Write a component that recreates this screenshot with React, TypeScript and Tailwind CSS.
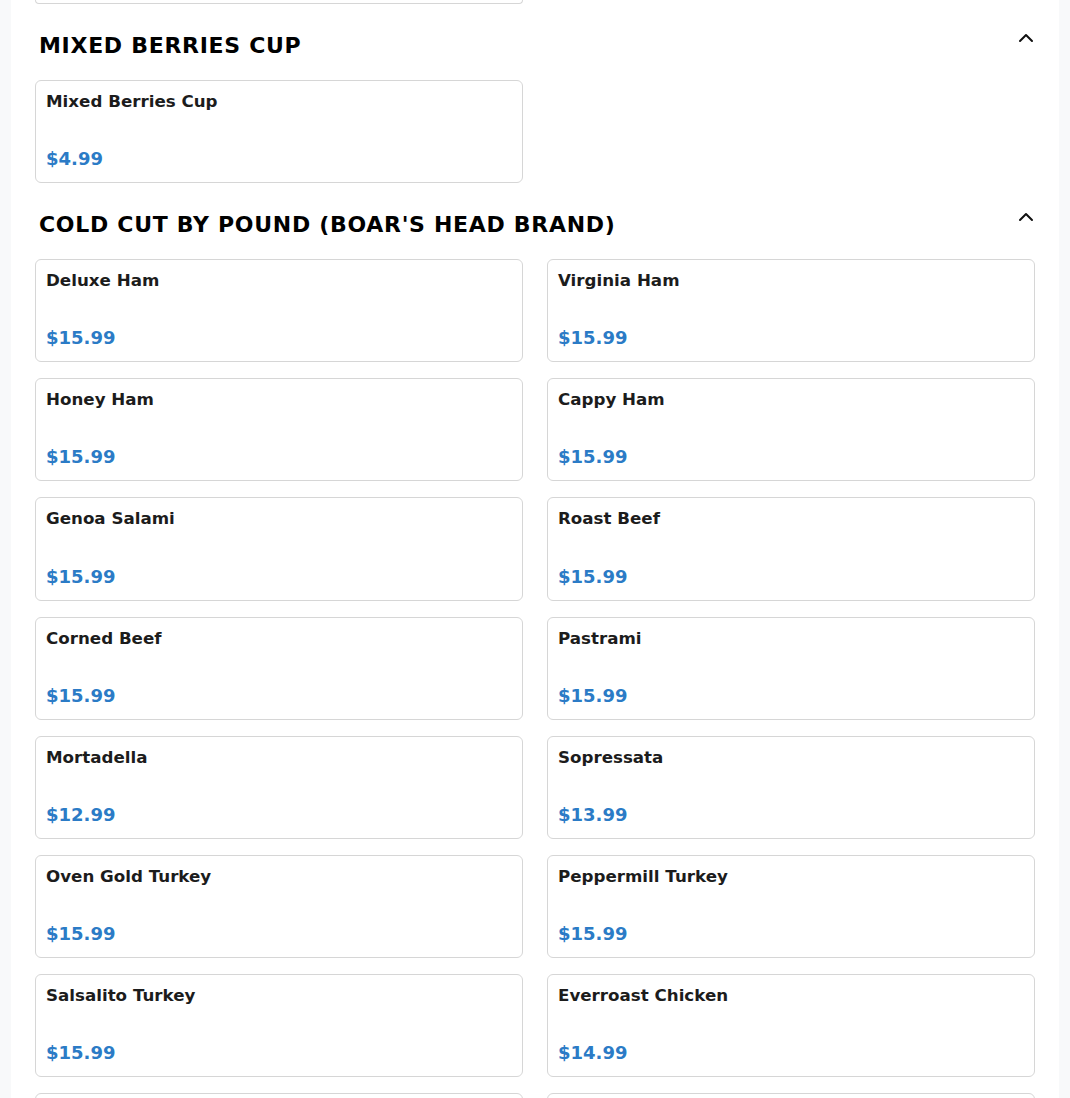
import React from "react";

type Item = { name: string; price: string };

const coldCuts: Item[] = [
  { name: "Deluxe Ham", price: "$15.99" },
  { name: "Virginia Ham", price: "$15.99" },
  { name: "Honey Ham", price: "$15.99" },
  { name: "Cappy Ham", price: "$15.99" },
  { name: "Genoa Salami", price: "$15.99" },
  { name: "Roast Beef", price: "$15.99" },
  { name: "Corned Beef", price: "$15.99" },
  { name: "Pastrami", price: "$15.99" },
  { name: "Mortadella", price: "$12.99" },
  { name: "Sopressata", price: "$13.99" },
  { name: "Oven Gold Turkey", price: "$15.99" },
  { name: "Peppermill Turkey", price: "$15.99" },
  { name: "Salsalito Turkey", price: "$15.99" },
  { name: "Everroast Chicken", price: "$14.99" },
  { name: "American Cheese", price: "$11.99" },
  { name: "Swiss Cheese", price: "$12.99" },
];

function ChevronUp() {
  return (
    <svg
      width="24"
      height="24"
      viewBox="0 0 24 24"
      fill="none"
      stroke="#111"
      strokeWidth="2"
      strokeLinecap="round"
      strokeLinejoin="round"
    >
      <path d="m18 15-6-6-6 6" />
    </svg>
  );
}

function Card({ item }: { item: Item }) {
  return (
    <div className="h-[103.14px] rounded-md border border-[#d6d6d6] bg-white px-[10px] py-[10px] flex flex-col justify-between">
      <div className="text-[16.7px] leading-[21px] font-bold text-[#1c1c1c]">{item.name}</div>
      <div className="text-[18px] leading-[26px] font-bold text-[#2b7bc6]">{item.price}</div>
    </div>
  );
}

function Section({ title, items }: { title: string; items: Item[] }) {
  return (
    <section className="pt-6">
      <div className="flex items-start justify-between">
        <h2 className="pl-1 text-[22px] leading-[36px] font-bold tracking-[0.7px] text-black">{title}</h2>
        <button className="mt-[-2px] mr-[-3px] flex h-6 w-6 items-center justify-center">
          <ChevronUp />
        </button>
      </div>
      <div className="mt-4 grid grid-cols-2 gap-x-6 gap-y-4">
        {items.map((it, i) => (
          <Card key={i} item={it} />
        ))}
      </div>
    </section>
  );
}

export default function App() {
  return (
    <div
      className="min-h-screen bg-[#f8f9fa] px-[11px]"
      style={{ fontFamily: '"DejaVu Sans", "Liberation Sans", sans-serif' }}
    >
      <div className="bg-white px-6 pb-6">
        <div className="grid grid-cols-2 gap-x-6">
          <div className="h-[4px] rounded-b-md border-x border-b border-[#d6d6d6]" />
        </div>
        <Section title="MIXED BERRIES CUP" items={[{ name: "Mixed Berries Cup", price: "$4.99" }]} />
        <Section title="COLD CUT BY POUND (BOAR'S HEAD BRAND)" items={coldCuts} />
      </div>
    </div>
  );
}
